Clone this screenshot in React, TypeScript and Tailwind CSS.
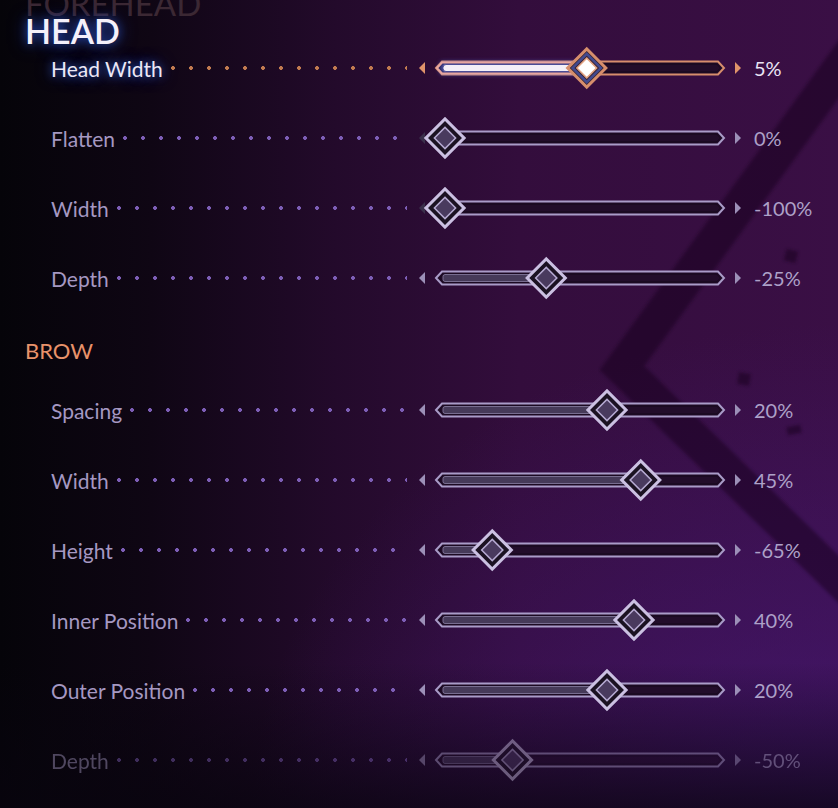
const FONT = "font-['Lato','Open_Sans',sans-serif]";

type Row = { label: string; value: string; f: number; active?: boolean; faded?: boolean };

const HEAD_ROWS: Row[] = [
  { label: "Head Width", value: "5%", f: 0.525, active: true },
  { label: "Flatten", value: "0%", f: 0 },
  { label: "Width", value: "-100%", f: 0 },
  { label: "Depth", value: "-25%", f: 0.375 },
];

const BROW_ROWS: Row[] = [
  { label: "Spacing", value: "20%", f: 0.6 },
  { label: "Width", value: "45%", f: 0.725 },
  { label: "Height", value: "-65%", f: 0.175 },
  { label: "Inner Position", value: "40%", f: 0.7 },
  { label: "Outer Position", value: "20%", f: 0.6 },
  { label: "Depth", value: "-50%", f: 0.25, faded: true },
];

function Slider({ f, active }: { f: number; active?: boolean }) {
  const cx = 33 + f * 270;
  const atMin = f === 0;
  const border = active ? "#d68e6c" : "#a99cc8";
  const arrow = active ? "#e0946a" : "#9c90b8";
  return (
    <svg width="336" height="48" viewBox="0 0 336 48" className="shrink-0">
      <defs>
        <filter id="glow" x="-20%" y="-200%" width="140%" height="500%">
          <feGaussianBlur stdDeviation="2.5" />
        </filter>
      </defs>
      <polygon points="7,24 13,18 13,30" fill={atMin ? "#3a2f4a" : arrow} />
      <polygon
        points="24,24 30,17.5 306,17.5 312,24 306,30.5 30,30.5"
        fill="#220d2a"
        stroke={border}
        strokeWidth="2"
      />
      <polygon
        points="27.5,24 31.5,20 304.5,20 308.5,24 304.5,28 31.5,28"
        fill="none"
        stroke="#0c0510"
        strokeOpacity="0.55"
        strokeWidth="1"
      />
      {active ? (
        <>
          <rect x="28" y="18" width={cx - 28} height="12" rx="3" fill="#5a70e0" opacity="0.7" filter="url(#glow)" />
          <polygon points={`25,24 30,18.5 ${cx},18.5 ${cx},29.5 30,29.5`} fill="none" stroke="#e8a6a0" strokeWidth="2" />
          <rect x="31" y="20.5" width={cx - 31} height="7" rx="3" fill="#f3eff8" stroke="#4b4c96" strokeWidth="1" />
        </>
      ) : (
        f > 0 && (
          <rect x="31" y="20.5" width={cx - 31} height="7" rx="2" fill="#463a59" stroke="#8b80a6" strokeWidth="0.8" />
        )
      )}
      <polygon points="323,18 329,24 323,30" fill={arrow} />
      {active ? (
        <g transform={`translate(${cx} 24) rotate(45)`}>
          <rect x="-13.5" y="-13.5" width="27" height="27" fill="#3a2230" stroke="#d68e6c" strokeWidth="3" />
          <rect x="-10" y="-10" width="20" height="20" fill="none" stroke="#42498e" strokeWidth="2.5" />
          <rect x="-7" y="-7" width="14" height="14" fill="#ffffff" stroke="#e3a383" strokeWidth="1.5" />
        </g>
      ) : (
        <g transform={`translate(${cx} 24) rotate(45)`}>
          <rect x="-13.5" y="-13.5" width="27" height="27" fill="#1b1222" stroke="#cbc0e2" strokeWidth="3" />
          <rect x="-7.5" y="-7.5" width="15" height="15" fill="#493a5e" stroke="#b6aad2" strokeWidth="1.5" />
        </g>
      )}
    </svg>
  );
}

function SliderRow({ row }: { row: Row }) {
  return (
    <div className={`flex h-[70px] items-center pl-[51px] ${row.faded ? "opacity-45" : ""}`}>
      <div className="flex w-[361px] items-center pr-[5px]">
        <span
          className={`whitespace-nowrap text-[21px] leading-none ${
            row.active
              ? "text-[#ece8f6] [text-shadow:0_0_8px_#2c4fb0,0_0_16px_#1d3a90]"
              : "text-[#a598c2]"
          }`}
        >
          {row.label}
        </span>
        <div
          className={`ml-[7px] h-[6px] flex-1 bg-repeat-x ${
            row.active
              ? "bg-[radial-gradient(circle_at_3px_3px,#c17b50_1.6px,transparent_2.2px)]"
              : "bg-[radial-gradient(circle_at_3px_3px,#7d5eb6_1.6px,transparent_2.2px)]"
          } bg-[length:18px_6px]`}
        />
      </div>
      <Slider f={row.f} active={row.active} />
      <span
        className={`ml-[6px] text-[20px] leading-none ${
          row.active ? "text-[#e9e4f4]" : "text-[#ada1c8]"
        }`}
      >
        {row.value}
      </span>
    </div>
  );
}

function Backdrop() {
  return (
    <svg className="absolute inset-0" width="838" height="808" viewBox="0 0 838 808">
      <defs>
        <filter id="soft" x="-10%" y="-10%" width="120%" height="120%">
          <feGaussianBlur stdDeviation="1.5" />
        </filter>
      </defs>
      <g filter="url(#soft)" opacity="0.5">
        <polyline
          points="860,40 622,368 860,600"
          fill="none"
          stroke="#14051f"
          strokeWidth="34"
          strokeLinejoin="miter"
        />
        <rect x="785" y="250" width="12" height="12" fill="#14051f" transform="rotate(15 791 256)" />
        <rect x="738" y="373" width="12" height="12" fill="#14051f" transform="rotate(10 744 379)" />
        <rect x="787" y="426" width="14" height="8" fill="#14051f" transform="rotate(-10 794 430)" />
      </g>
    </svg>
  );
}

export default function App() {
  return (
    <div
      className={`relative h-[808px] w-[838px] overflow-hidden bg-[linear-gradient(90deg,#050409_0%,#0f0614_18%,#230a2b_40%,#330d3c_62%,#3a0f45_100%)] ${FONT}`}
    >
      <div className="absolute inset-0 bg-[radial-gradient(ellipse_70%_60%_at_100%_100%,rgba(70,24,120,0.75),transparent)]" />
      <div className="absolute inset-0 bg-[linear-gradient(180deg,transparent_0%,transparent_82%,rgba(8,4,14,0.75)_100%)]" />
      <Backdrop />

      <div className="relative flex flex-col">
        {/* Header */}
        <div className="flex h-[33px] flex-col pl-[25px]">
          <div className="mt-[-9px] text-[33px] leading-[24px] text-[#3b2833]">FOREHEAD</div>
          <div className="mt-[4px] text-[34px] font-semibold leading-[24px] text-[#f4f0fa] [text-shadow:0_0_10px_#2a4bb0,0_0_18px_#1b3790]">
            HEAD
          </div>
        </div>

        {HEAD_ROWS.map((r) => (
          <SliderRow key={"h" + r.label} row={r} />
        ))}

        {/* Brow */}
        <div className="flex h-[62px] items-center pl-[25px] pt-[13px]">
          <span className="text-[22px] leading-none text-[#e8926a]">BROW</span>
        </div>

        {BROW_ROWS.map((r) => (
          <SliderRow key={"b" + r.label} row={r} />
        ))}
      </div>
    </div>
  );
}
